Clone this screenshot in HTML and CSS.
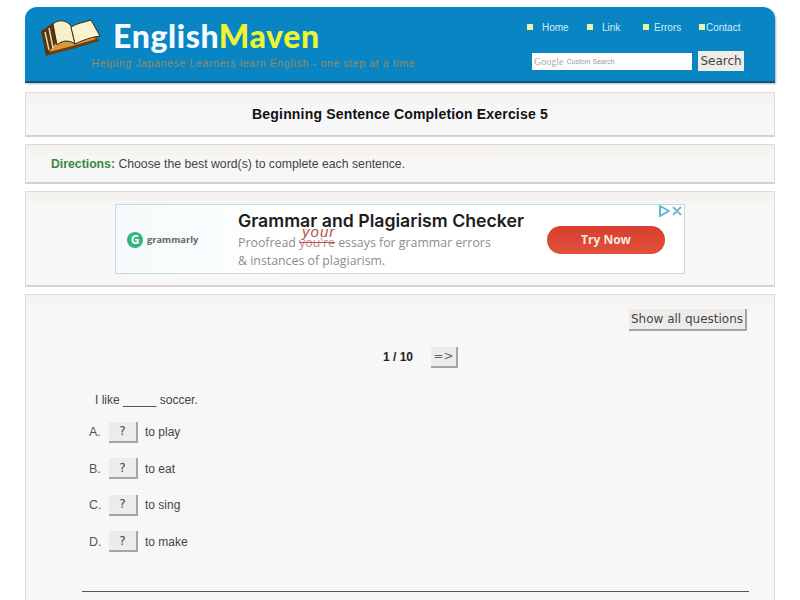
FILE: index.html
```html
<!DOCTYPE html>
<html lang="en">
<head>
    <meta charset="UTF-8">
    <meta name="viewport" content="width=device-width, initial-scale=1.0">
    <title>Beginning Sentence Completion Exercise 5</title>
    <link rel="stylesheet" href="styles.css">
</head>
<body>
    <div class="wrapper">
        <header class="site-header">
            <div class="brand">
                <div class="logo-row">
                    <svg class="logo-book" width="62" height="40" viewBox="0 0 62 40">
                        <path d="M1 15 L13 7 L17 32 L6 40 Z" fill="#5a3413"/>
                        <path d="M6 40 L32 33 L60 25 L55 21 L17 30 Z" fill="#6b3d14"/>
                        <path d="M9 36 L32 30 L56 23 L52 19 L15 28 Z" fill="#d99a3c"/>
                        <path d="M13 8 C18 3 27 4 31 10 L35 28 C30 24 22 24 17 29 Z" fill="#f7f0c8" stroke="#3c2410" stroke-width="1"/>
                        <path d="M31 11 C37 7 46 6 51 4 L60 20 C52 21 43 24 35 28 Z" fill="#fbf4cf" stroke="#3c2410" stroke-width="1"/>
                        <path d="M5 16 L9 34 M9 12 L13 32" stroke="#e8d9a0" stroke-width="1.5" fill="none"/>
                    </svg>
                    <div class="logo-text">English<span class="logo-accent">Maven</span></div>
                </div>
                <div class="tagline">Helping Japanese Learners learn English - one step at a time</div>
            </div>
            <div class="header-right">
                <nav class="top-nav">
                    <a class="nav-item nav-home" href="#">Home</a>
                    <a class="nav-item nav-link" href="#">Link</a>
                    <a class="nav-item nav-errors" href="#">Errors</a>
                    <a class="nav-item nav-contact" href="#">Contact</a>
                </nav>
                <form class="search-form">
                    <div class="search-box"><span class="search-google">Google</span><span class="search-custom">Custom Search</span></div>
                    <button type="button" class="search-btn">Search</button>
                </form>
            </div>
        </header>

        <div class="panel title-panel">
            <h1>Beginning Sentence Completion Exercise 5</h1>
        </div>

        <div class="panel directions-panel">
            <span class="directions-label">Directions:</span> Choose the best word(s) to complete each sentence.
        </div>

        <div class="panel ad-panel">
            <div class="ad">
                <div class="ad-brand">
                    <span class="ad-g">G</span>
                    <span class="ad-name">grammarly</span>
                </div>
                <div class="ad-copy">
                    <div class="ad-title">Grammar and Plagiarism Checker</div>
                    <div class="ad-line">Proofread <span class="ad-fix"><span class="ad-your">your</span><span class="ad-strike">you're</span></span> essays for grammar errors</div>
                    <div class="ad-line">&amp; instances of plagiarism.</div>
                </div>
                <div class="ad-cta">Try Now</div>
                <div class="ad-marks">
                    <svg width="12" height="12" viewBox="0 0 12 12"><path d="M2 1 L11 6 L2 11 Z" fill="none" stroke="#5cb8d8" stroke-width="2"/></svg>
                    <svg width="12" height="12" viewBox="0 0 12 12"><path d="M2 2 L10 10 M10 2 L2 10" stroke="#7fb4cc" stroke-width="2"/></svg>
                </div>
            </div>
        </div>

        <div class="panel quiz-panel">
            <div class="quiz-top">
                <button type="button" class="bevel-btn show-all">Show all questions</button>
            </div>
            <div class="pager">
                <span class="pager-count">1 / 10</span>
                <button type="button" class="bevel-btn next-btn">=&gt;</button>
            </div>
            <p class="question">I like _____ soccer.</p>
            <div class="choice">
                <span class="choice-letter">A.</span>
                <button type="button" class="bevel-btn check-btn">?</button>
                <span>to play</span>
            </div>
            <div class="choice">
                <span class="choice-letter">B.</span>
                <button type="button" class="bevel-btn check-btn">?</button>
                <span>to eat</span>
            </div>
            <div class="choice">
                <span class="choice-letter">C.</span>
                <button type="button" class="bevel-btn check-btn">?</button>
                <span>to sing</span>
            </div>
            <div class="choice">
                <span class="choice-letter">D.</span>
                <button type="button" class="bevel-btn check-btn">?</button>
                <span>to make</span>
            </div>
            <hr class="quiz-rule">
        </div>
    </div>
</body>
</html>
```

FILE: styles.css
```css
html, body {
    height: 600px;
    overflow: hidden;
}

body {
    margin: 0;
    background-color: white;
    font-family: "Liberation Sans", Arial, sans-serif;
    font-size: 12px;
    color: #444;
}

.wrapper {
    width: 750px;
    margin: 0 auto;
    padding-top: 7px;
    display: flex;
    flex-direction: column;
    gap: 7px;
}

.site-header {
    height: 76px;
    box-sizing: border-box;
    margin-bottom: 2px;
    background-color: #0a85c4;
    border-bottom: 2px solid #14557a;
    border-radius: 12px 12px 0 0;
    box-shadow: 1px 1px 2px rgba(0, 0, 0, 0.3);
    display: flex;
    justify-content: space-between;
}

.brand {
    padding: 9px 0 0 15px;
}

.logo-row {
    display: flex;
    align-items: center;
    height: 40px;
    gap: 11px;
}

.logo-text {
    font-family: Lato, sans-serif;
    font-weight: 900;
    font-size: 32px;
    line-height: 38px;
    letter-spacing: 0.6px;
    color: #f2fbff;
}

.logo-accent {
    color: #ecf52f;
}

.tagline {
    margin: 1px 0 0 52px;
    font-size: 10.5px;
    letter-spacing: 0.65px;
    white-space: nowrap;
    color: #a8894f;
    filter: blur(0.7px);
}

.header-right {
    width: 248px;
    padding: 13px 0 0 0;
}

.top-nav {
    display: flex;
    height: 14px;
    align-items: center;
}

.nav-item {
    display: flex;
    align-items: center;
    color: #d6ecf7;
    font-size: 10px;
    text-decoration: none;
}

.nav-item::before {
    content: "";
    width: 6px;
    height: 6px;
    background-color: #e8f5a0;
    margin-right: 9px;
}

.nav-home {
    width: 60px;
}

.nav-link {
    width: 56px;
}

.nav-errors {
    width: 56px;
}

.nav-errors::before {
    margin-right: 5px;
}

.nav-contact::before {
    margin-right: 1px;
}

.search-form {
    display: flex;
    align-items: center;
    gap: 6px;
    margin: 17px 0 0 5px;
}

.search-box {
    width: 160px;
    height: 17px;
    box-sizing: border-box;
    background-color: white;
    padding-left: 2px;
    display: flex;
    align-items: center;
    gap: 3px;
    font-size: 7px;
    color: #999;
}

.search-google {
    font-family: "Liberation Serif", serif;
    font-size: 10px;
    color: #aaa;
}

.search-btn {
    width: 46px;
    height: 20px;
    padding: 0;
    border: none;
    background-color: #efedea;
    font-family: "DejaVu Sans", sans-serif;
    font-size: 12px;
    color: #444;
}

.panel {
    box-sizing: border-box;
    background-color: #f8f7f7;
    background-image: linear-gradient(#f4f1ed, #f8f7f7 16px);
    border: 1px solid #dcdad8;
    border-bottom: 2px solid #d4d2d0;
}

.title-panel {
    height: 45px;
    display: flex;
    align-items: center;
    justify-content: center;
}

h1 {
    margin: 0;
    font-size: 14px;
    letter-spacing: 0.18px;
    color: #111;
}

.directions-panel {
    height: 40px;
    padding: 12px 0 0 25px;
    font-size: 12.25px;
    color: #444;
}

.directions-label {
    font-weight: bold;
    color: #3a8a3e;
}

.ad-panel {
    height: 96px;
    padding-top: 12px;
}

.ad {
    position: relative;
    width: 570px;
    height: 70px;
    box-sizing: border-box;
    margin: 0 auto 0 89px;
    background-color: white;
    background-image: linear-gradient(90deg, #f4fafb, white 30%);
    border: 1px solid #c5dcd8;
    display: flex;
    font-family: "Open Sans", sans-serif;
}

.ad-brand {
    width: 122px;
    padding: 27px 0 0 11px;
    box-sizing: border-box;
    display: flex;
    align-items: flex-start;
    gap: 4px;
}

.ad-g {
    width: 16px;
    height: 16px;
    border-radius: 50%;
    background-color: #2fb67c;
    color: white;
    font-size: 12px;
    font-weight: bold;
    line-height: 16px;
    text-align: center;
}

.ad-name {
    font-size: 9.3px;
    font-weight: bold;
    line-height: 16px;
    color: #666;
}

.ad-copy {
    width: 309px;
    padding-top: 4px;
}

.ad-title {
    font-family: Inter, sans-serif;
    font-size: 17.7px;
    font-weight: 600;
    line-height: 24px;
    margin-bottom: 1px;
    color: #1c1c1c;
    white-space: nowrap;
}

.ad-line {
    font-size: 12.35px;
    line-height: 18px;
    color: #8d8d8d;
    white-space: nowrap;
}

.ad-fix {
    position: relative;
    display: inline-block;
}

.ad-strike {
    color: #b98a86;
    text-decoration: line-through;
    text-decoration-color: #c0564e;
}

.ad-your {
    position: absolute;
    left: 3px;
    top: -10px;
    font-family: "Liberation Sans", sans-serif;
    font-style: italic;
    font-size: 15px;
    letter-spacing: 1px;
    line-height: 15px;
    color: #b9504a;
}

.ad-cta {
    width: 118px;
    height: 28px;
    margin-top: 21px;
    border-radius: 14px;
    background-color: #d9402f;
    background-image: linear-gradient(#d63f2d, #e2503c);
    color: #fbe9e4;
    font-size: 12px;
    font-weight: 700;
    line-height: 27px;
    text-align: center;
}

.ad-marks {
    position: absolute;
    top: 0;
    right: 1px;
    display: flex;
    gap: 1px;
}

.quiz-panel {
    height: 330px;
    padding: 14px 25px 0 56px;
}

.quiz-top {
    display: flex;
    justify-content: flex-end;
    margin-right: 2px;
}

.bevel-btn {
    padding: 0;
    background-color: #eeecea;
    border: none;
    border-right: 2px solid #a5a5a5;
    border-bottom: 2px solid #a5a5a5;
    font-family: "DejaVu Sans", sans-serif;
    color: #444;
}

.show-all {
    width: 118px;
    height: 22px;
    font-size: 12px;
}

.pager {
    display: flex;
    align-items: center;
    margin: 15px 0 0 301px;
    height: 22px;
}

.pager-count {
    width: 48px;
    font-weight: bold;
    font-size: 12px;
    color: #222;
}

.next-btn {
    width: 27px;
    height: 21px;
    font-size: 12px;
    color: #666;
}

.question {
    margin: 24px 0 0 13px;
    line-height: 16px;
    font-size: 12px;
}

.choice {
    display: flex;
    align-items: center;
    height: 22px;
    margin-top: 14.6px;
    font-size: 12px;
}

.question + .choice {
    margin-top: 13px;
}

.choice-letter {
    width: 20px;
    margin-left: 7px;
    font-size: 12.5px;
    color: #555;
}

.check-btn {
    width: 29px;
    height: 21px;
    margin-right: 7px;
    font-size: 12px;
}

.quiz-rule {
    margin: 38px 0 0 0;
    border: none;
    border-top: 1px solid #555;
}
```
